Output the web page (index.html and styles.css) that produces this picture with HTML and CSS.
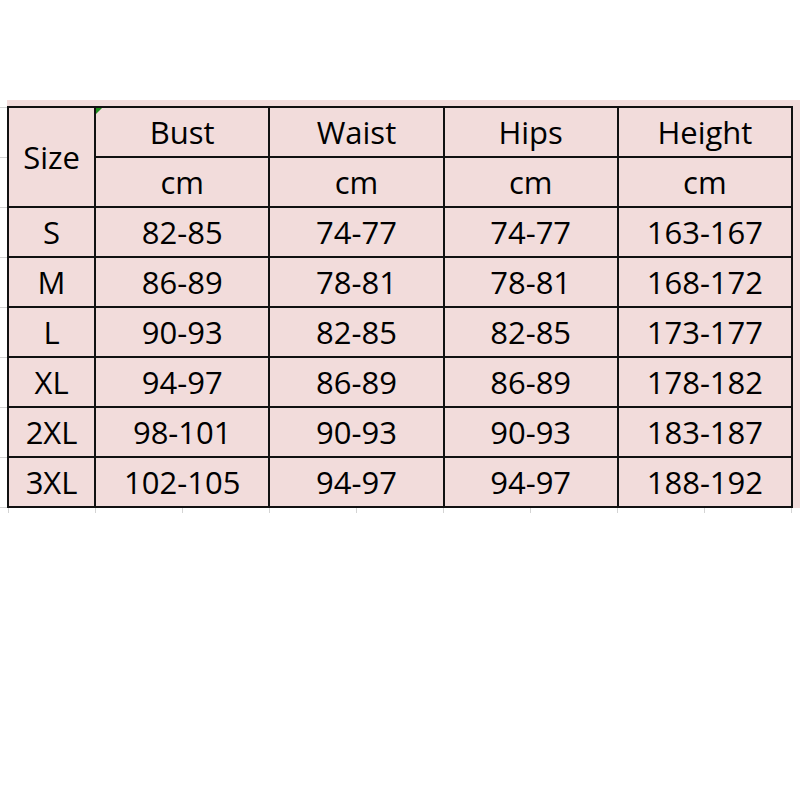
FILE: index.html
```html
<!DOCTYPE html>
<html>
<head>
<meta charset="utf-8">
<link rel="stylesheet" href="styles.css">
</head>
<body>
<div class="sheet">
  <div class="band">
    <div class="row-ticks"></div>
    <div class="pink">
      <table class="size-table">
        <colgroup>
          <col class="c-size"><col class="c-val"><col class="c-val"><col class="c-val"><col class="c-val">
        </colgroup>
        <tr>
          <td rowspan="2">Size</td>
          <td class="flag">Bust</td>
          <td>Waist</td>
          <td>Hips</td>
          <td>Height</td>
        </tr>
        <tr><td>cm</td><td>cm</td><td>cm</td><td>cm</td></tr>
        <tr><td>S</td><td>82-85</td><td>74-77</td><td>74-77</td><td>163-167</td></tr>
        <tr><td>M</td><td>86-89</td><td>78-81</td><td>78-81</td><td>168-172</td></tr>
        <tr><td>L</td><td>90-93</td><td>82-85</td><td>82-85</td><td>173-177</td></tr>
        <tr><td>XL</td><td>94-97</td><td>86-89</td><td>86-89</td><td>178-182</td></tr>
        <tr><td>2XL</td><td>98-101</td><td>90-93</td><td>90-93</td><td>183-187</td></tr>
        <tr><td>3XL</td><td>102-105</td><td>94-97</td><td>94-97</td><td>188-192</td></tr>
      </table>
    </div>
  </div>
  <div class="col-ticks"></div>
</div>
</body>
</html>
```

FILE: styles.css
```css
html, body {
  margin: 0;
  padding: 0;
  background: #ffffff;
}

.sheet {
  padding-top: 100px;
  display: flex;
  flex-direction: column;
}

.band {
  display: flex;
}

.row-ticks {
  width: 7px;
  flex: 0 0 7px;
  margin-top: 7px;
  background: repeating-linear-gradient(to bottom, #d4d4d4 0, #d4d4d4 1px, transparent 1px, transparent 50px);
}

.pink {
  flex: 1;
  background: #f2dcdb;
  padding-top: 6px;
}

.size-table {
  border-collapse: collapse;
  table-layout: fixed;
  width: 786px;
  font-family: "Open Sans", "Noto Sans", sans-serif;
  font-size: 31px;
  color: #000;
}

.c-size { width: 87px; }
.c-val { width: 174px; }

.size-table td {
  border: 2px solid #111;
  height: 48px;
  padding: 0;
  text-align: center;
  vertical-align: middle;
  line-height: 48px;
  white-space: nowrap;
}

.flag {
  position: relative;
}

.flag::before {
  content: "";
  position: absolute;
  left: 0;
  top: 0;
  width: 0;
  height: 0;
  border-top: 6px solid #1e8c1e;
  border-right: 6px solid transparent;
}

.col-ticks {
  margin-left: 8px;
  width: 785px;
  height: 5px;
  background: repeating-linear-gradient(to right, #d4d4d4 0, #d4d4d4 1px, transparent 1px, transparent 87px);
}
```
